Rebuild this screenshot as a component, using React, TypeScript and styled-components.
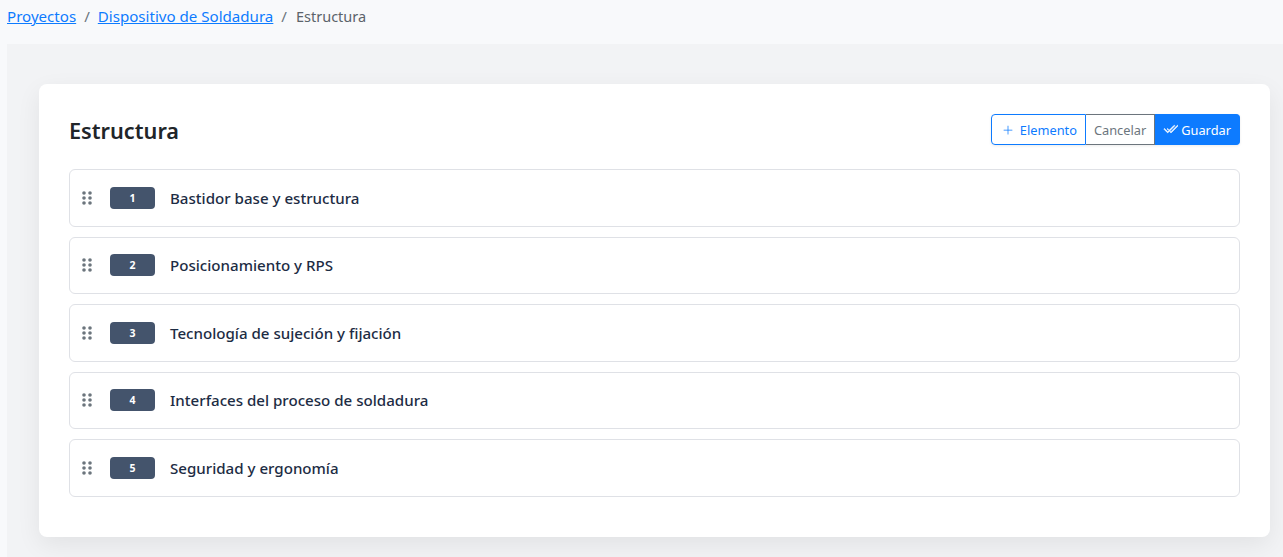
import { createGlobalStyle } from 'styled-components';
import styled from 'styled-components';
import { BsCheck2All, BsPlusLg } from 'react-icons/bs';

const GlobalStyle = createGlobalStyle`
    html, body {
        margin: 0;
        height: 100%;
        overflow: hidden;
        background: #f8f9fb;
        font-family: 'Noto Sans', 'Open Sans', sans-serif;
    }
`;

const Breadcrumb = styled.nav`
    display: flex;
    align-items: center;
    height: 32px;
    padding-left: 7px;
    font-size: 15.1px;
    color: #6c757d;
`;

const CrumbLink = styled.a`
    color: #0d7bff;
    text-decoration: underline;
`;

const Separator = styled.span`
    padding: 0 8px;
`;

const Current = styled.span`
    margin-left: 1px;
    font-size: 14.5px;
    color: #5c636a;
`;

const Main = styled.main`
    margin: 12px 0 0 7px;
    padding: 40px 13px 20px 32px;
    height: 513px;
    box-sizing: border-box;
    background: #f2f3f5;
`;

const Card = styled.section`
    background: #fff;
    border-radius: 8px;
    box-shadow: 0 8px 24px rgba(0, 0, 0, 0.07);
    padding: 30px;
    height: 453px;
    box-sizing: border-box;
`;

const Header = styled.header`
    display: flex;
    justify-content: space-between;
    align-items: center;
    height: 30px;
    margin-bottom: 25px;
`;

const Title = styled.h2`
    margin: 2px 0 0;
    font-size: 21.7px;
    font-weight: 600;
    color: #212529;
`;

const ButtonGroup = styled.div`
    display: flex;
    height: 31px;
    box-shadow: 0 1px 3px rgba(0, 0, 0, 0.08);
    border-radius: 4px;
`;

const GroupButton = styled.button<{ $variant: 'outline' | 'muted' | 'solid' }>`
    display: flex;
    align-items: center;
    gap: ${p => (p.$variant === 'outline' ? '6px' : '3px')};
    height: 31px;
    box-sizing: border-box;
    padding: 1px 8px 0 ${p => (p.$variant === 'outline' ? '10px' : '8px')};
    font-family: inherit;
    font-size: 12.8px;
    background: ${p => (p.$variant === 'solid' ? '#0d7bff' : '#fff')};
    color: ${p => (p.$variant === 'solid' ? '#fff' : p.$variant === 'muted' ? '#6c757d' : '#0d7bff')};
    border: 1px solid ${p => (p.$variant === 'muted' ? '#6c757d' : '#0d7bff')};
    border-left-width: ${p => (p.$variant === 'outline' ? '1px' : '0')};
    border-radius: ${p => (p.$variant === 'outline' ? '4px 0 0 4px' : p.$variant === 'solid' ? '0 4px 4px 0' : '0')};
`;

const List = styled.div`
    display: flex;
    flex-direction: column;
    gap: 10px;
`;

const Row = styled.div`
    display: flex;
    align-items: center;
    height: 57.5px;
    box-sizing: border-box;
    padding-left: 12px;
    border: 1px solid #dfe1e6;
    border-radius: 6px;
    background: #fff;
`;

const Grip = styled.svg`
    width: 10px;
    height: 14px;
    margin-right: 18px;
    fill: #6c757d;
`;

const Badge = styled.span`
    display: flex;
    align-items: center;
    justify-content: center;
    width: 45px;
    height: 22px;
    margin-right: 15px;
    border-radius: 4px;
    background: #44546c;
    color: #fff;
    font-size: 10.5px;
    font-weight: 700;
`;

const RowTitle = styled.span`
    font-size: 15.1px;
    font-weight: 500;
    color: #1d2c44;
`;

const items = [
    'Bastidor base y estructura',
    'Posicionamiento y RPS',
    'Tecnología de sujeción y fijación',
    'Interfaces del proceso de soldadura',
    'Seguridad y ergonomía',
];

export default function App() {
    return (
        <>
            <GlobalStyle />
            <Breadcrumb>
                <CrumbLink href="#">Proyectos</CrumbLink>
                <Separator>/</Separator>
                <CrumbLink href="#">Dispositivo de Soldadura</CrumbLink>
                <Separator>/</Separator>
                <Current>Estructura</Current>
            </Breadcrumb>
            <Main>
                <Card>
                    <Header>
                        <Title>Estructura</Title>
                        <ButtonGroup>
                            <GroupButton $variant="outline">
                                <BsPlusLg size={12} />
                                Elemento
                            </GroupButton>
                            <GroupButton $variant="muted">Cancelar</GroupButton>
                            <GroupButton $variant="solid">
                                <BsCheck2All size={15} stroke="currentColor" strokeWidth={0.6} />
                                Guardar
                            </GroupButton>
                        </ButtonGroup>
                    </Header>
                    <List>
                        {items.map((item, i) => (
                            <Row key={item}>
                                <Grip viewBox="0 0 10 14">
                                    {[2, 7, 12].map(y => (
                                        <g key={y}>
                                            <circle cx="2" cy={y} r="1.8" />
                                            <circle cx="8" cy={y} r="1.8" />
                                        </g>
                                    ))}
                                </Grip>
                                <Badge>{i + 1}</Badge>
                                <RowTitle>{item}</RowTitle>
                            </Row>
                        ))}
                    </List>
                </Card>
            </Main>
        </>
    );
}
